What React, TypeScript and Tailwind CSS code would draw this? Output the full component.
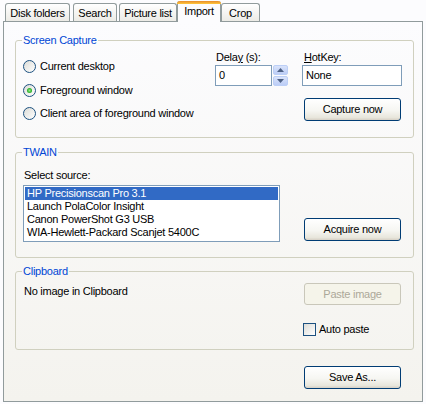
import React from 'react';

type Kids = { children?: React.ReactNode; className?: string };

const Tab = ({ label, active, className = '' }: { label: string; active?: boolean; className?: string }) => {
  if (active) {
    return (
      <div className={`relative z-10 -mb-px flex h-[21px] flex-col rounded-t-[3px] border-x border-[#919b9c] bg-[#fcfcfe] ${className}`}>
        <div className="h-[3px] rounded-t-[3px] bg-gradient-to-b from-[#e68b2c] to-[#ffc83c] -mx-px" />
        <div className="flex flex-1 items-start justify-center pt-[1px] leading-[13px]">{label}</div>
      </div>
    );
  }
  return (
    <div
      className={`flex h-[18px] items-center justify-center rounded-t-[3px] border border-b-0 border-[#919b9c] bg-gradient-to-b from-white to-[#ecebe6] pt-[1px] leading-[13px] ${className}`}
    >
      {label}
    </div>
  );
};

const XPButton = ({ children, disabled, className = '' }: Kids & { disabled?: boolean }) => (
  <button
    disabled={disabled}
    className={`flex items-center justify-center rounded-[3px] border leading-[13px] tracking-[-0.25px] ${
      disabled
        ? 'border-[#c9c7ba] bg-[#f5f4ea] text-[#aca899]'
        : 'border-[#003c74] bg-[linear-gradient(180deg,#ffffff_0%,#f6f6f2_55%,#e8e6dc_88%,#d6d0c5_100%)] text-black'
    } ${className}`}
  >
    {children}
  </button>
);

const Radio = ({ checked, label, className = '' }: { checked?: boolean; label: string; className?: string }) => (
  <div className={`flex h-[13px] items-center ${className}`}>
    <span className="flex h-[13px] w-[13px] items-center justify-center rounded-full border border-[#1c5180] bg-gradient-to-br from-[#dcdcd7] to-white">
      {checked && (
        <span className="h-[5px] w-[5px] rounded-full bg-[radial-gradient(circle,#9be88a_0%,#2cb52c_60%,#1a8a1a_100%)]" />
      )}
    </span>
    <span className="ml-[4px] leading-[13px]">{label}</span>
  </div>
);

const GroupBox = ({ title, className = '', children }: Kids & { title: string }) => (
  <fieldset className={`w-[399px] rounded-[3px] border border-[#d0d0bf] ${className}`}>
    <legend className="ml-[6px] px-[1px] leading-[14px] text-[#0046d5]">{title}</legend>
    {children}
  </fieldset>
);

const Spinner = () => (
  <div className="ml-[1px] flex h-[21px] w-[15px] flex-col">
    {[0, 1].map((i) => (
      <div
        key={i}
        className={`flex h-[10px] items-center justify-center rounded-[2px] border border-[#bccff7] bg-gradient-to-b from-[#d9e3fb] to-[#bccdf6] ${
          i === 1 ? 'mt-[1px]' : ''
        }`}
      >
        <svg width="7" height="4" viewBox="0 0 7 4">
          {i === 0 ? <path d="M0 4 L3.5 0 L7 4 Z" fill="#4d6185" /> : <path d="M0 0 L3.5 4 L7 0 Z" fill="#4d6185" />}
        </svg>
      </div>
    ))}
  </div>
);

const sources = [
  'HP Precisionscan Pro 3.1',
  'Launch PolaColor Insight',
  'Canon PowerShot G3 USB',
  'WIA-Hewlett-Packard Scanjet 5400C',
];

export default function App() {
  return (
    <div className="h-[404px] w-[426px] bg-[#fcfcfe] font-[family-name:'Liberation_Sans',Arial,sans-serif] text-[11px] tracking-[-0.25px] text-black">
      {/* tab strip */}
      <div className="flex h-[21px] items-end pl-[5px]">
        <Tab label="Disk folders" className="w-[65px]" />
        <Tab label="Search" className="ml-[3px] w-[44px]" />
        <Tab label="Picture list" className="ml-[2px] w-[58px]" />
        <Tab label="Import" active className="w-[44px]" />
        <Tab label="Crop" className="w-[39px]" />
      </div>

      {/* tab page */}
      <div className="ml-[3px] h-[381px] w-[420px] border border-[#919b9c] bg-gradient-to-b from-[#fcfcfe] to-[#f4f3ee] pl-[11px] pt-[11px]">
        <GroupBox title="Screen Capture" className="h-[105px]">
          <div className="flex">
            <div className="w-[199px] pl-[7px] pt-[13px]">
              <Radio label="Current desktop" />
              <Radio label="Foreground window" checked className="mt-[11px]" />
              <Radio label="Client area of foreground window" className="mt-[10px]" />
            </div>
            <div className="w-[87px] pt-[3px]">
              <div className="pl-[1px] leading-[14px]">
                Dela<span className="underline">y</span> (s):
              </div>
              <div className="mt-[1px] flex">
                <div className="flex h-[21px] w-[57px] items-center border border-[#7f9db9] bg-white pl-[3px]">0</div>
                <Spinner />
              </div>
            </div>
            <div className="w-[100px] pt-[3px]">
              <div className="pl-[2px] leading-[14px]">
                <span className="underline">H</span>otKey:
              </div>
              <div className="mt-[1px] flex h-[21px] items-center border border-[#7f9db9] bg-white pl-[3px]">None</div>
              <XPButton className="ml-[2px] mt-[12px] h-[23px] w-[97px]">Capture now</XPButton>
            </div>
          </div>
        </GroupBox>

        <GroupBox title="TWAIN" className="mt-[7px] h-[113px]">
          <div className="pl-[8px] pt-[9px] leading-[14px]">Select source:</div>
          <div className="mt-[3px] flex items-end pl-[7px]">
            <div className="h-[57px] w-[257px] border border-[#7f9db9] bg-white p-[1px]">
              {sources.map((s, i) => (
                <div
                  key={s}
                  className={`h-[13px] pl-[2px] leading-[13px] ${i === 0 ? 'bg-[#316ac5] text-white' : ''}`}
                >
                  {s}
                </div>
              ))}
            </div>
            <XPButton className="mb-[1px] ml-[24px] h-[23px] w-[97px]">Acquire now</XPButton>
          </div>
        </GroupBox>

        <GroupBox title="Clipboard" className="mt-[6px] h-[86px]">
          <div className="flex justify-between">
            <div className="pl-[8px] pt-[6px] leading-[14px]">No image in Clipboard</div>
            <div className="mr-[12px] w-[97px] pt-[5px]">
              <XPButton disabled className="h-[22px] w-[97px]">
                Paste image
              </XPButton>
              <div className="-ml-px mt-[18px] flex items-center">
                <span className="h-[13px] w-[13px] border border-[#1c5180] bg-gradient-to-br from-[#dcdcd7] to-white" />
                <span className="ml-[3px] leading-[13px]">Auto paste</span>
              </div>
            </div>
          </div>
        </GroupBox>

        <div className="mt-[16px] flex w-[399px] justify-end pr-[13px]">
          <XPButton className="h-[23px] w-[97px]">Save As...</XPButton>
        </div>
      </div>
    </div>
  );
}
